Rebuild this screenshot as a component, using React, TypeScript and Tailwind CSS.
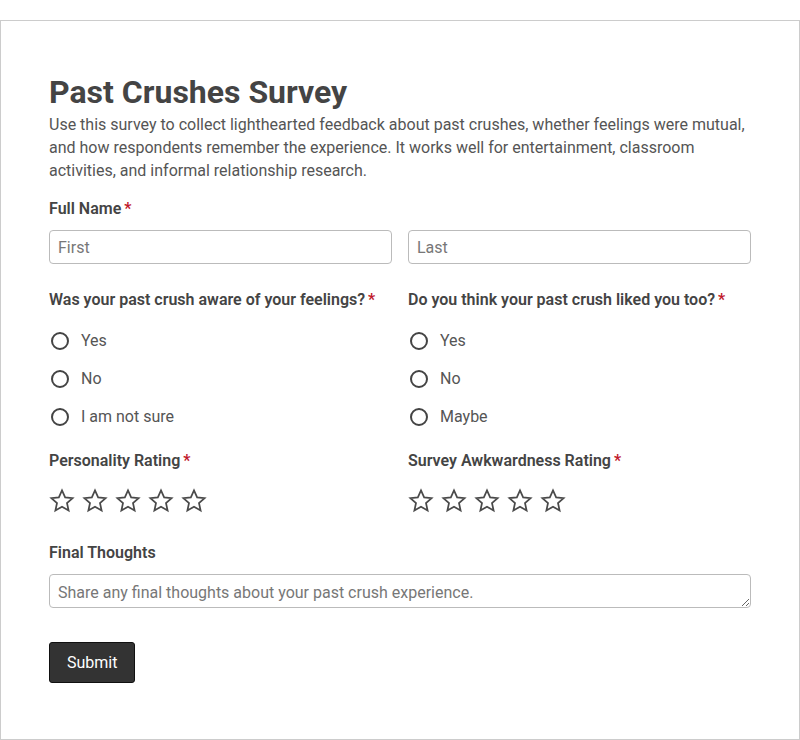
import { useState } from "react";

const Req = () => <span className="text-[#c0182b] ml-[3px]">*</span>;

const Star = () => (
  <svg width="26" height="26" viewBox="0 0 24 24" className="text-[#4a4a4a]">
    <polygon
      points="12,2.2 14.9,8.6 21.8,9.3 16.6,13.9 18.1,20.8 12,17.2 5.9,20.8 7.4,13.9 2.2,9.3 9.1,8.6"
      fill="none"
      stroke="currentColor"
      strokeWidth="1.6"
      strokeLinejoin="miter"
    />
  </svg>
);

const Radio = ({ label, name }: { label: string; name: string }) => (
  <label className="flex items-center h-[38px] cursor-pointer">
    <span className="w-[18px] h-[18px] rounded-full border-2 border-[#444] ml-[2px] mr-[12px]" />
    <input type="radio" name={name} className="hidden" />
    <span className="text-[#555]">{label}</span>
  </label>
);

const Stars = () => (
  <div className="flex gap-[7px] mt-[15px]">
    {[1, 2, 3, 4, 5].map((i) => (
      <Star key={i} />
    ))}
  </div>
);

export default function App() {
  const [first, setFirst] = useState("");
  const [last, setLast] = useState("");

  return (
    <div className="bg-white pt-[20px] font-['Roboto',sans-serif] text-base">
      <div className="border border-[#ccc] px-12 pt-[52px] pb-[56px]">
        <h1 className="text-[32px] leading-[38px] font-bold text-[#444]">Past Crushes Survey</h1>
        <p className="mt-[2px] text-[#555] leading-[23px]">
          Use this survey to collect lighthearted feedback about past crushes, whether feelings were mutual,
          and how respondents remember the experience. It works well for entertainment, classroom
          activities, and informal relationship research.
        </p>

        <div className="mt-[15px] font-semibold text-[#444] leading-6">
          Full Name
          <Req />
        </div>
        <div className="grid grid-cols-2 gap-4 mt-[9px]">
          <input
            value={first}
            onChange={(e) => setFirst(e.target.value)}
            placeholder="First"
            className="h-[34px] px-2 border border-[#bbb] rounded-[4px] placeholder-[#777] text-[#444] outline-none"
          />
          <input
            value={last}
            onChange={(e) => setLast(e.target.value)}
            placeholder="Last"
            className="h-[34px] px-2 border border-[#bbb] rounded-[4px] placeholder-[#777] text-[#444] outline-none"
          />
        </div>

        <div className="grid grid-cols-2 gap-4 mt-[24px]">
          <div>
            <div className="font-semibold text-[#444] leading-6">
              Was your past crush aware of your feelings?
              <Req />
            </div>
            <div className="mt-[10px]">
              <Radio name="aware" label="Yes" />
              <Radio name="aware" label="No" />
              <Radio name="aware" label="I am not sure" />
            </div>
          </div>
          <div>
            <div className="font-semibold text-[#444] leading-6">
              Do you think your past crush liked you too?
              <Req />
            </div>
            <div className="mt-[10px]">
              <Radio name="liked" label="Yes" />
              <Radio name="liked" label="No" />
              <Radio name="liked" label="Maybe" />
            </div>
          </div>
        </div>

        <div className="grid grid-cols-2 gap-4 mt-[13px]">
          <div>
            <div className="font-semibold text-[#444] leading-6">
              Personality Rating
              <Req />
            </div>
            <Stars />
          </div>
          <div>
            <div className="font-semibold text-[#444] leading-6">
              Survey Awkwardness Rating
              <Req />
            </div>
            <Stars />
          </div>
        </div>

        <div className="mt-[27px] font-semibold text-[#444] leading-6">Final Thoughts</div>
        <textarea
          rows={1}
          placeholder="Share any final thoughts about your past crush experience."
          className="block w-full h-[34px] mt-[9px] px-2 pt-[7px] pb-[3px] border border-[#bbb] rounded-[4px] placeholder-[#777] text-[#444] outline-none leading-[22px]"
        />

        <button className="mt-[34px] h-[41px] px-[17px] bg-[#333] text-white border border-[#111] rounded-[3px]">
          Submit
        </button>
      </div>
    </div>
  );
}
